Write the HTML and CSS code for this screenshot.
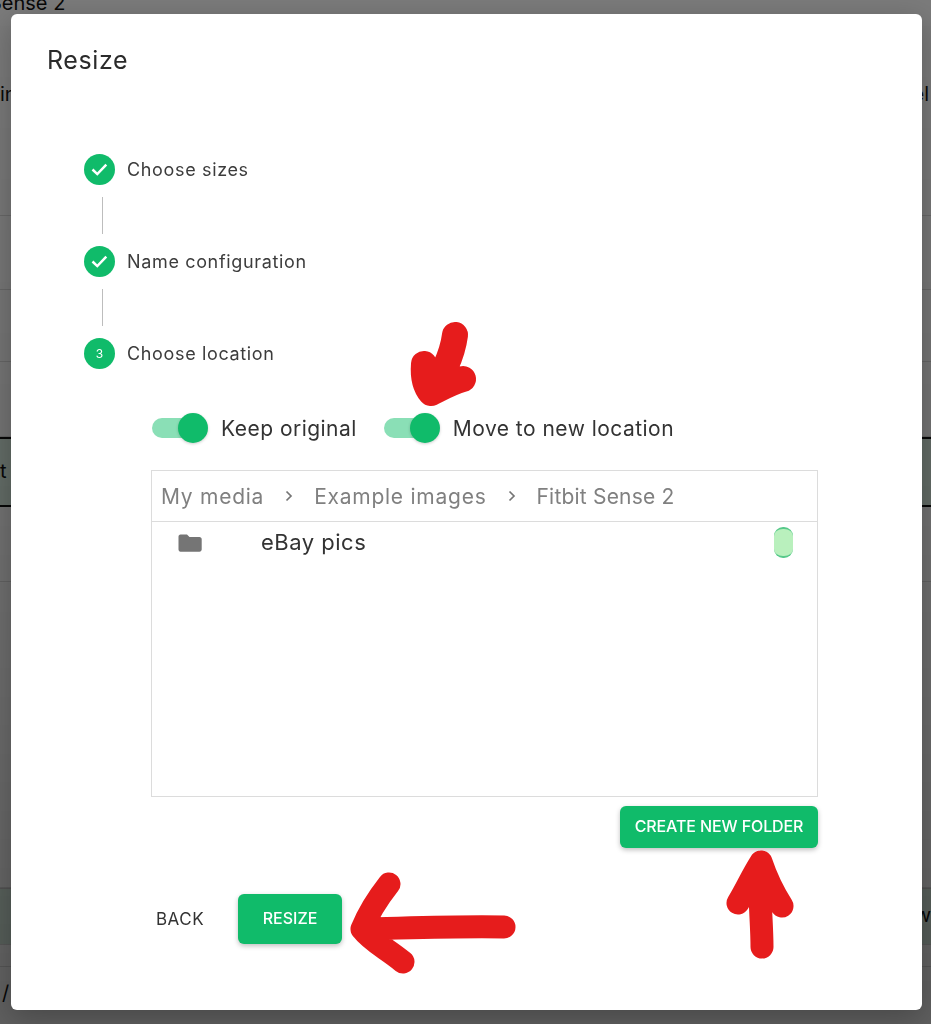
FILE: index.html
```html
<!DOCTYPE html>
<html lang="en">
<head>
  <meta charset="UTF-8" />
  <title>Resize</title>
  <meta name="viewport" content="width=device-width, initial-scale=1" />
  <link rel="stylesheet" href="styles.css">
</head>
<body>

  <!-- Page behind the dialog -->
  <div class="page" aria-hidden="true">
    <div class="bg-row bg-head">
      <span class="bg-title">Sense 2</span>
      <div class="bg-cols"><span>in</span><span>el</span></div>
    </div>
    <div class="bg-row h-74"></div>
    <div class="bg-row h-72"></div>
    <div class="bg-row h-75"></div>
    <div class="bg-row bg-band h-70"><span class="bg-edge">t</span></div>
    <div class="bg-row h-75"></div>
    <div class="bg-row h-306"></div>
    <div class="bg-row bg-soft h-57"><span class="bg-edge bg-right">w</span></div>
    <div class="bg-row h-22"></div>
    <div class="bg-last">/</div>
  </div>

  <div class="backdrop">
    <section class="dialog">
      <h2 class="dialog-title">Resize</h2>

      <ol class="stepper">
        <li class="step">
          <span class="step-dot">
            <svg width="20" height="20" viewBox="0 0 20 20" aria-hidden="true"><path d="M2.500 9.500l4.800 4.600 9-9.400" fill="none" stroke="#fff" stroke-width="2.500"/></svg>
          </span>
          <span class="step-label">Choose sizes</span>
        </li>
        <li class="step-line"></li>
        <li class="step">
          <span class="step-dot">
            <svg width="20" height="20" viewBox="0 0 20 20" aria-hidden="true"><path d="M2.500 9.500l4.800 4.600 9-9.400" fill="none" stroke="#fff" stroke-width="2.500"/></svg>
          </span>
          <span class="step-label">Name configuration</span>
        </li>
        <li class="step-line"></li>
        <li class="step">
          <span class="step-dot">3</span>
          <span class="step-label">Choose location</span>
        </li>
      </ol>

      <div class="location">
        <div class="switches">
          <label class="switch-item keep">
            <span class="switch"><span class="thumb"></span></span>
            Keep original
          </label>
          <label class="switch-item">
            <span class="switch"><span class="thumb"></span></span>
            Move to new location
          </label>
        </div>

        <div class="browser">
          <div class="crumbs">
            <span class="crumb">My media</span>
            <svg class="chev" width="12" height="12" viewBox="0 0 12 12" aria-hidden="true"><path d="M3.500 1.500L8 6l-4.500 4.500" fill="none" stroke="#757575" stroke-width="1.700"/></svg>
            <span class="crumb">Example images</span>
            <svg class="chev" width="12" height="12" viewBox="0 0 12 12" aria-hidden="true"><path d="M3.500 1.500L8 6l-4.500 4.500" fill="none" stroke="#757575" stroke-width="1.700"/></svg>
            <span class="crumb crumb-last">Fitbit Sense 2</span>
          </div>
          <div class="folder-row">
            <svg class="folder" width="24" height="18" viewBox="0 0 24 18" aria-hidden="true"><path d="M2.500 0.500h6.500l2.500 2.500h10c1.200 0 2.200 1 2.200 2.200v10.300c0 1.200-1 2.200-2.200 2.200H2.500C1.300 17.700 0.500 16.700 0.500 15.500V2.700C0.500 1.500 1.300 0.500 2.500 0.500z" fill="#757575"/></svg>
            <span class="folder-name">eBay pics</span>
            <span class="pill"></span>
          </div>
        </div>

        <div class="browser-actions">
          <button type="button" class="btn btn-folder">CREATE NEW FOLDER</button>
        </div>
      </div>

      <div class="actions">
        <button type="button" class="btn-text">BACK</button>
        <button type="button" class="btn btn-resize">RESIZE</button>
      </div>
    </section>
  </div>

  <!-- Hand drawn arrows on top of the screenshot -->
  <svg class="marks" width="931" height="1024" viewBox="0 0 931 1024" aria-hidden="true">
    <g fill="none" stroke="#e61c1c" stroke-width="23" stroke-linecap="round" stroke-linejoin="round">
      <path stroke-width="26" d="M455 335C452 358 441 376 431 392M424 364C423 376 425 386 431 393M463 379C452 382 441 388 431 393"/>
      <path d="M504 927C460 926 410 928 362 929M389 884C378 898 368 914 362 929M403 962C386 948 372 942 362 929"/>
      <path d="M761 862C758 890 762 920 762 947M738 903C746 890 752 876 761 862M782 906C773 892 767 880 761 862"/>
    </g>
  </svg>

</body>
</html>
```

FILE: styles.css
```css
* { box-sizing: border-box; }

html, body { height: 100%; }

body {
  margin: 0;
  overflow: hidden;
  font-family: "Inter", "Liberation Sans", sans-serif;
  color: #333;
  background: #fff;
}

/* ===== PAGE BEHIND ===== */
.page { height: 1024px; overflow: hidden; color: #111; font-size: 20px; }
.bg-row { border-bottom: 1px solid #ddd; position: relative; }
.bg-head { height: 216px; overflow: hidden; }
.bg-title { display: block; margin: -9px 0 0 -11px; line-height: 24px; }
.bg-cols { display: flex; justify-content: space-between; margin-top: 67px; padding-right: 2px; }
.h-74 { height: 74px; }
.h-72 { height: 72px; }
.h-75 { height: 75px; }
.h-70 { height: 70px; }
.h-306 { height: 306px; }
.h-57 { height: 57px; }
.h-22 { height: 22px; }
.bg-band { background: #dcf0e4; border-top: 2px solid #111; border-bottom: 2px solid #111; padding-top: 20px; }
.bg-soft { background: #dcf0e4; border-top: 1px solid #ccc; padding-top: 14px; text-align: right; }
.bg-edge { display: block; }
.bg-last { padding: 14px 0 0 2px; }

.backdrop {
  position: fixed;
  inset: 0;
  padding: 14px 9px 14px 11px;
  background: linear-gradient(rgba(0,0,0,0.52), rgba(0,0,0,0.56) 50%, rgba(0,0,0,0.63));
}

/* ===== DIALOG ===== */
.dialog {
  height: 996px;
  background: #fff;
  border-radius: 6px;
  box-shadow: 0 8px 30px rgba(0,0,0,0.25);
  padding: 29px 36px 0 36px;
}
.dialog-title {
  margin: 0;
  font-size: 25px;
  line-height: 34px;
  letter-spacing: .6px;
  font-weight: 400;
  color: #2b2b2b;
}

.stepper { list-style: none; margin: 77px 0 0 37px; padding: 0; }
.step { display: flex; align-items: center; gap: 12px; height: 31px; }
.step-dot {
  width: 31px; height: 31px; border-radius: 50%;
  background: #10bb6a; color: #fff;
  display: flex; align-items: center; justify-content: center;
  font-size: 12px;
}
.step-label { font-size: 18px; letter-spacing: .65px; color: #3c3c3c; }
.step-line {
  width: 1px; height: 37px;
  margin: 12px 0 12px 18px;
  background: #bdbdbd;
}

.location { margin: 0 0 0 104px; width: 667px; }

.switches { display: flex; align-items: center; margin-top: 43px; height: 32px; }
.switch-item { display: flex; align-items: center; gap: 21px; font-size: 21px; letter-spacing: .47px; color: #333; }
.keep { margin-right: 26px; }
.switch {
  position: relative; display: block;
  width: 48px; height: 20px; margin-left: 1px;
  border-radius: 10px;
  background: #8adfb6;
}
.thumb {
  position: absolute; top: -5px; right: -8px;
  width: 30px; height: 30px; border-radius: 50%;
  background: #10bb6a;
  box-shadow: 0 1px 3px rgba(0,0,0,0.2);
}

.browser {
  height: 327px;
  margin-top: 26px;
  border: 1px solid #dcdcdc;
}
.crumbs {
  display: flex; align-items: center; gap: 19px;
  height: 51px; padding-left: 9px;
  border-bottom: 1px solid #dcdcdc;
}
.crumb { font-size: 21px; letter-spacing: .75px; color: #808080; }
.crumb-last { letter-spacing: .2px; }

.folder-row { display: flex; align-items: center; height: 41px; padding: 0 24px 0 26px; }
.folder { margin-right: 59px; }
.folder-name { font-size: 22px; letter-spacing: .5px; line-height: 41px; color: #333; flex: 1; align-self: flex-start; }
.pill {
  width: 19px; height: 31px; border-radius: 9px;
  background: #b9f0bd;
  border-top: 2px solid #57c98a;
  border-bottom: 2px solid #57c98a;
}

.browser-actions { display: flex; justify-content: flex-end; margin-top: 9px; }

.btn {
  border: none; border-radius: 6px;
  background: #10bb6a; color: #fff;
  font-family: inherit; font-weight: 500;
  box-shadow: 0 2px 5px rgba(0,0,0,0.25);
}
.btn-folder { width: 198px; height: 42px; font-size: 16px; letter-spacing: -.1px; padding: 0 0 2px; }

.actions { display: flex; align-items: center; margin: 46px 0 0 109px; }
.btn-text {
  width: 82px; padding: 0; text-align: left;
  border: none; background: none;
  font-family: inherit; font-size: 17px; letter-spacing: .5px; color: #333;
}
.btn-resize { width: 104px; height: 50px; font-size: 16px; padding: 0 0 2px; }

.marks { position: absolute; top: 0; left: 0; pointer-events: none; }
```
